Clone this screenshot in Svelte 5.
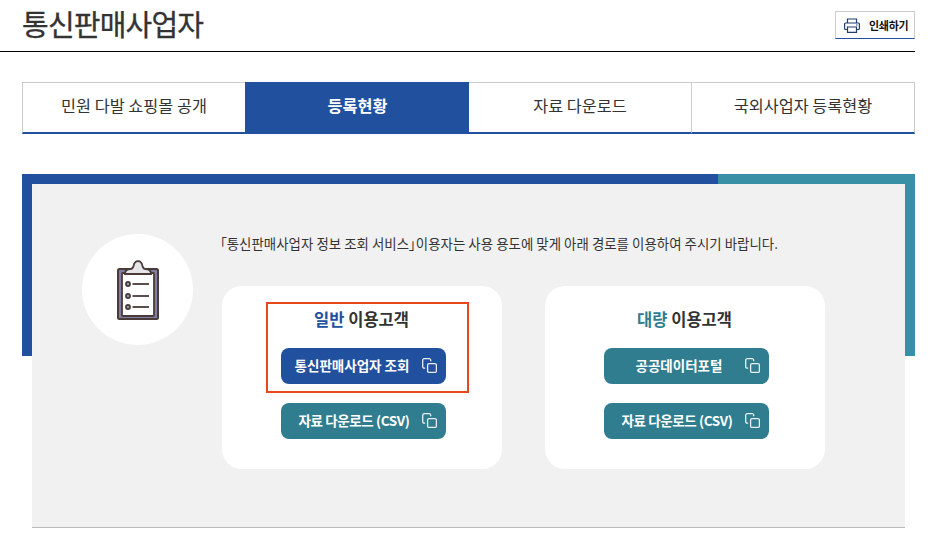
<script>
  const tabs = [
    { label: "민원 다발 쇼핑몰 공개" },
    { label: "등록현황", active: true },
    { label: "자료 다운로드" },
    { label: "국외사업자 등록현황" },
  ];

  const groups = [
    {
      key: "일반",
      tone: "blue",
      links: [
        { label: "통신판매사업자 조회", primary: true, pad: 23 },
        { label: "자료 다운로드 (CSV)", pad: 19, tight: true },
      ],
    },
    {
      key: "대량",
      tone: "teal",
      links: [
        { label: "공공데이터포털", pad: 15 },
        { label: "자료 다운로드 (CSV)", pad: 19, tight: true },
      ],
    },
  ];
</script>

{#snippet copyIcon()}
  <svg class="copy" width="15" height="15" viewBox="0 0 15 15" fill="none" stroke="#e8f0f4" stroke-width="1.3">
    <rect x="5.6" y="5.6" width="8.8" height="8.8" rx="1.5" />
    <path d="M3.2 10.2H2.2A1.500 1.500 0 0 1 .7 8.700V2.200A1.500 1.500 0 0 1 2.200 .7h5A1.500 1.500 0 0 1 8.700 2.200v1" />
  </svg>
{/snippet}

<div class="page">
  <header class="head">
    <h1>통신판매사업자</h1>
    <button class="print">
      <svg width="16" height="15" viewBox="0 0 16 15" fill="none" stroke="#1f3f6e" stroke-width="1.2">
        <path d="M3.500 5V1h9v4" />
        <rect x=".6" y="5" width="14.800" height="6.500" rx="1" />
        <path d="M3.500 9h9v5.400h-9z" fill="#fff" />
        <path d="M12 7h1.500" />
      </svg>
      <span>인쇄하기</span>
    </button>
  </header>

  <nav class="tabs">
    {#each tabs as tab}
      <button class="tab" class:active={tab.active}>{tab.label}</button>
    {/each}
  </nav>

  <section class="frame">
    <div class="panel">
      <div class="badge">
        <svg width="42" height="60" viewBox="0 0 42 60">
          <rect x="1" y="9" width="40" height="50" rx="1.500" fill="#7d80a3" stroke="#4a3a38" stroke-width="2" />
          <rect x="5" y="13" width="32" height="43" rx="1" fill="#fff" stroke="#4a3a38" stroke-width="1.800" />
          <path d="M8 14c0-3 2-5 5.500-5 1.500 0 2.500-1 3-3 .5-2.500 2-4.800 4.500-4.800s4 2.300 4.500 4.800c.5 2 1.500 3 3 3 3.500 0 5.500 2 5.500 5z" fill="#e6e6e8" stroke="#4a3a38" stroke-width="1.800" />
          {#each [24, 36, 47] as y}
            <circle cx="11" cy={y} r="2" fill="#8fc4c4" stroke="#4a3a38" stroke-width="1.800" />
            <path d="M15.500 {y}h16.500" stroke="#4a3a38" stroke-width="1.800" />
          {/each}
        </svg>
      </div>

      <div class="body">
        <p class="notice"><span class="mark">「</span>통신판매사업자 정보 조회 서비스<span class="mark">」</span>이용자는 사용 용도에 맞게 아래 경로를 이용하여 주시기 바랍니다.</p>

        <div class="cards">
          {#each groups as group}
            <div class="card">
              <div class="inner" class:marked={group.tone === "blue"}>
                <h2><em class={group.tone}>{group.key}</em> 이용고객</h2>
                <button class="link" class:primary={group.links[0].primary} style="padding-right: {group.links[0].pad}px">
                  <span>{group.links[0].label}</span>
                  {@render copyIcon()}
                </button>
              </div>
              <button class="link" class:tight={group.links[1].tight} style="padding-right: {group.links[1].pad}px">
                <span>{group.links[1].label}</span>
                {@render copyIcon()}
              </button>
            </div>
          {/each}
        </div>
      </div>
    </div>
  </section>
</div>

<style>
  :global(body) {
    margin: 0;
    background: #fff;
  }

  .page {
    width: 944px;
    height: 536px;
    overflow: hidden;
    box-sizing: border-box;
    padding-right: 29px;
    font-family: "Noto Sans CJK KR", "Noto Sans", sans-serif;
    color: #333;
  }

  button {
    font-family: inherit;
    cursor: pointer;
  }

  .head {
    height: 51px;
    display: flex;
    justify-content: space-between;
    align-items: flex-start;
    padding-left: 22px;
    border-bottom: 1px solid #000;
  }

  h1 {
    margin: 0;
    font-size: 29px;
    line-height: 47px;
    font-weight: 400;
    letter-spacing: -0.8px;
    color: #333;
    -webkit-text-stroke: 0.3px #333;
  }

  .print {
    display: flex;
    align-items: center;
    gap: 9px;
    width: 80px;
    height: 28px;
    margin-top: 11px;
    padding: 0 0 0 8px;
    background: #fff;
    border: 1px solid #ccc;
    border-bottom: 1px solid #20509e;
    font-size: 11px;
    font-weight: 700;
    color: #111;
    white-space: nowrap;
    letter-spacing: -0.3px;
  }

  .tabs {
    display: grid;
    grid-template-columns: 223px 224px 222px 224px;
    height: 52px;
    margin: 30px 0 40px 22px;
  }

  .tab {
    box-sizing: border-box;
    background: #fff;
    border: 1px solid #ccc;
    border-bottom: 2px solid #20509e;
    border-right: none;
    padding: 0 0 6px;
    font-size: 16.3px;
    color: #333;
  }
  .tab:last-child {
    border-right: 1px solid #ccc;
  }
  .tab.active {
    background: #20509e;
    border-color: #20509e;
    color: #fff;
    font-weight: 700;
  }
  .tab.active + .tab {
    border-left: none;
  }

  .frame {
    margin-left: 22px;
    padding: 10px 10px 0;
    background:
      linear-gradient(to right, #20509e 696px, #3790a5 696px) no-repeat top / 100% 182px;
  }

  .panel {
    box-sizing: border-box;
    height: 344px;
    display: flex;
    align-items: flex-start;
    gap: 29px;
    padding: 50px 80px 0 50px;
    background: #f1f1f1;
    border-bottom: 1px solid #bbb;
  }

  .badge {
    flex: none;
    width: 111px;
    height: 111px;
    border-radius: 50%;
    background: #fff;
    display: flex;
    align-items: center;
    justify-content: center;
  }

  .body {
    flex: 1;
    min-width: 0;
  }

  .notice {
    margin: -1px 0 33px -2px;
    font-size: 13.4px;
    line-height: 20px;
    letter-spacing: 0.05px;
    white-space: nowrap;
    color: #333;
  }
  .mark {
    font-feature-settings: "palt";
  }

  .cards {
    display: flex;
    gap: 43px;
  }

  .card {
    box-sizing: border-box;
    width: 280px;
    height: 183px;
    padding: 16px 0 0 3px;
    border-radius: 20px;
    background: #fff;
    display: flex;
    flex-direction: column;
    align-items: center;
  }

  .inner {
    box-sizing: border-box;
    width: 203px;
    height: 91px;
    display: flex;
    flex-direction: column;
    align-items: center;
    margin: 0 0 10px 8px;
    padding: 0 21px 0 13px;
    border: 2px solid transparent;
  }
  .inner.marked {
    border-color: #e8471b;
  }

  h2 {
    margin: 0 4px 14px 0;
    font-size: 16.5px;
    line-height: 30px;
    font-weight: 700;
    color: #333;
    white-space: nowrap;
  }

  em {
    font-style: normal;
  }
  .blue {
    color: #20509e;
  }
  .teal {
    color: #307d90;
  }

  .link {
    position: relative;
    box-sizing: border-box;
    width: 165px;
    height: 36px;
    flex: none;
    border: none;
    border-radius: 8px;
    background: #307d90;
    color: #fff;
    font-size: 13.5px;
    font-weight: 700;
    padding: 0 0 2px;
    white-space: nowrap;
  }
  .link.primary {
    background: #20509e;
  }
  .link.tight {
    letter-spacing: -0.4px;
  }

  .copy {
    position: absolute;
    right: 9px;
    top: 10px;
  }
</style>
